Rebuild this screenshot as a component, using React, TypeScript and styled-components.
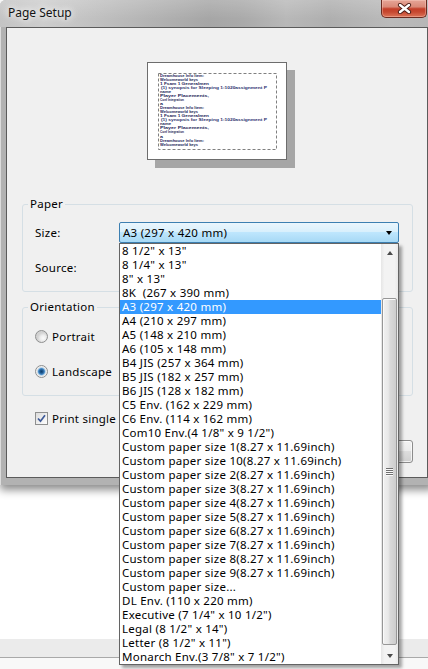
import React from 'react'
import styled, { createGlobalStyle } from 'styled-components'

const GlobalStyle = createGlobalStyle`
  html, body {
    margin: 0;
    padding: 0;
    background: #ffffff;
  }
  body {
    width: 428px;
    height: 669px;
    overflow: hidden;
    font-family: "Noto Sans", "Open Sans", sans-serif;
    font-size: 11.5px;
    letter-spacing: 0.25px;
    color: #000;
  }
`;

const Screen = styled.div`
  width: 428px;
  height: 669px;
  display: flex;
  flex-direction: column;
  overflow: hidden;
  background: #fff;
`;

const Window = styled.div`
  width: 434px;
  height: 485px;
  flex-shrink: 0;
  display: flex;
  flex-direction: column;
  position: relative;
  z-index: 1;
  background: #b2b2b2;
  border-radius: 6px 6px 0 0;
  box-shadow: inset 1px 0 0 #dcdcdc, 0 5px 9px rgba(0, 0, 0, 0.45);
`;

const TitleBar = styled.div`
  height: 27px;
  flex-shrink: 0;
  display: flex;
  align-items: flex-start;
  padding: 0 7px 0 8px;
  border-radius: 6px 6px 0 0;
  background:
    linear-gradient(180deg, rgba(255, 255, 255, 0.18), rgba(255, 255, 255, 0) 70%),
    linear-gradient(90deg, #c4c4c4 0%, #cdcdcd 10%, #bdbdbd 25%, #a6a6a6 48%, #aaaaaa 56%, #b8b8b8 66%, #afafaf 76%, #bababa 90%, #b6b6b6 100%);
`;

const Title = styled.span`
  margin-top: 5px;
  line-height: 16px;
  font-size: 12px;
  letter-spacing: 0;
  color: #141414;
  text-shadow: 0 0 6px #fff, 0 0 10px #fff;
`;

const CloseButton = styled.div`
  margin-left: auto;
  width: 46px;
  height: 18px;
  box-sizing: border-box;
  display: flex;
  align-items: center;
  justify-content: center;
  border: 1px solid #6b2b20;
  border-top: none;
  border-radius: 0 0 5px 5px;
  background: linear-gradient(180deg, #e6a597 0%, #da8a78 40%, #c43f29 52%, #c64830 70%, #dc7458 100%);
  box-shadow: inset 0 0 0 1px rgba(255, 220, 210, 0.35);
`;

const Client = styled.div`
  flex: 1;
  margin: 0 6px 7px 6px;
  border: 1px solid #5b5b5b;
  background: #f0f0f0;
  display: flex;
  flex-direction: column;
`;

const PreviewArea = styled.div`
  height: 168px;
  flex-shrink: 0;
  box-sizing: border-box;
  padding-top: 34px;
  display: flex;
  justify-content: center;
`;

const Sheet = styled.div`
  width: 140px;
  height: 98px;
  box-sizing: border-box;
  border: 1px solid #6d6d6d;
  background: #fff;
  box-shadow: 8px 8px 0 #a6a6a6;
`;

const Group = styled.fieldset<{ $top: number }>`
  margin: ${p => p.$top}px 14px 0 15px;
  padding: 0;
  border: 1px solid #d5dfe5;
  border-radius: 3px;
  min-inline-size: 0;
`;

const Legend = styled.legend`
  margin-left: 5px;
  padding: 0 2px;
  line-height: 16px;
`;

const GroupBody = styled.div<{ $padTop: number; $padBottom: number; $gap: number }>`
  display: flex;
  flex-direction: column;
  gap: ${p => p.$gap}px;
  padding: ${p => p.$padTop}px 13px ${p => p.$padBottom}px 12px;
`;

const FieldRow = styled.div`
  display: flex;
  align-items: center;
  height: 21px;
`;

const FieldLabel = styled.span`
  width: 84px;
  flex-shrink: 0;
`;

const Combo = styled.div<{ $focused?: boolean }>`
  position: relative;
  flex: 1;
  height: 21px;
  box-sizing: border-box;
  display: flex;
  align-items: center;
  padding: 0 0 0 3px;
  border: 1px solid ${p => (p.$focused ? '#3c7fb1' : '#707070')};
  border-radius: 2px;
  background: ${p =>
    p.$focused
      ? 'linear-gradient(180deg, #eaf6fd 0%, #d9f0fc 45%, #bee6fd 50%, #a7d9f5 100%)'
      : 'linear-gradient(180deg, #f2f2f2 0%, #ebebeb 45%, #dddddd 50%, #cfcfcf 100%)'};
`;

const ComboText = styled.span`
  flex: 1;
  white-space: pre;
`;

const DownGlyph = styled.span<{ $color?: string }>`
  width: 0;
  height: 0;
  border-left: 3.5px solid transparent;
  border-right: 3.5px solid transparent;
  border-top: 4px solid ${p => p.$color || '#000'};
`;

const UpGlyph = styled.span`
  width: 0;
  height: 0;
  border-left: 3.5px solid transparent;
  border-right: 3.5px solid transparent;
  border-bottom: 4px solid #4a4a4a;
`;

const ComboArrow = styled.span`
  width: 19px;
  display: flex;
  justify-content: center;
`;

const DropList = styled.div`
  position: absolute;
  left: -1px;
  top: calc(100% + 1px);
  width: 280px;
  height: 422px;
  box-sizing: border-box;
  z-index: 10;
  display: flex;
  border: 1px solid #646464;
  background: #fff;
  box-shadow: 3px 3px 3px rgba(0, 0, 0, 0.35);
`;

const Options = styled.div`
  flex: 1;
  display: flex;
  flex-direction: column;
`;

const Option = styled.div<{ $selected?: boolean }>`
  height: 14px;
  line-height: 14px;
  padding-left: 2px;
  white-space: pre;
  background: ${p => (p.$selected ? '#3399ff' : 'transparent')};
  color: ${p => (p.$selected ? '#fff' : '#000')};
`;

const ScrollBar = styled.div`
  width: 17px;
  display: flex;
  flex-direction: column;
  background: linear-gradient(90deg, #e6e6e6 0%, #f3f3f3 20%, #f3f3f3 80%, #e9e9e9 100%);
`;

const ScrollButton = styled.div`
  height: 17px;
  flex-shrink: 0;
  display: flex;
  align-items: center;
  justify-content: center;
`;

const Track = styled.div<{ $offset: number }>`
  flex: 1;
  padding-top: ${p => p.$offset}px;
  padding-bottom: 1px;
  display: flex;
  flex-direction: column;
`;

const Thumb = styled.div<{ $size: number }>`
  height: ${p => p.$size}px;
  margin: 0 1px;
  box-sizing: border-box;
  border: 1px solid #979797;
  border-radius: 2px;
  background: linear-gradient(90deg, #f1f1f1 0%, #e9e9e9 40%, #d9d9d9 55%, #cdcdcd 100%);
  box-shadow: inset 1px 1px 0 #fbfbfb;
  display: flex;
  flex-direction: column;
  align-items: center;
  justify-content: center;
  gap: 1px;
`;

const Grip = styled.span`
  width: 7px;
  height: 1px;
  background: #6f6f6f;
  box-shadow: 0 1px 0 #fafafa;
`;

const OptionRow = styled.div`
  display: flex;
  align-items: center;
  gap: 4px;
  height: 20px;
`;

const Radio = styled.span<{ $checked?: boolean }>`
  width: 13px;
  height: 13px;
  box-sizing: border-box;
  flex-shrink: 0;
  border-radius: 50%;
  border: 1px solid #8e8f8f;
  background: ${p =>
    p.$checked
      ? 'radial-gradient(circle at 50% 50%, #0f3f6e 0, #1e5a92 1.6px, #4b8cc6 3px, #a9d0ee 3.8px, #e4e4e4 4.4px, #f6f6f6 5.5px)'
      : 'radial-gradient(circle at 65% 65%, #fbfbfb 0, #ececec 3px, #d2d2d2 5.5px)'};
`;

const CheckRow = styled.div`
  display: flex;
  align-items: center;
  gap: 4px;
  height: 20px;
  margin: 12px 0 0 28px;
`;

const Check = styled.span`
  width: 13px;
  height: 13px;
  box-sizing: border-box;
  flex-shrink: 0;
  display: flex;
  align-items: center;
  justify-content: center;
  border: 1px solid #8e8f8f;
  background: linear-gradient(135deg, #dcdcdc 0%, #f1f1f1 60%, #fdfdfd 100%);
`;

const ButtonRow = styled.div`
  display: flex;
  justify-content: flex-end;
  gap: 6px;
  margin-top: 12px;
  padding-right: 14px;
`;

const Button = styled.div`
  width: 75px;
  height: 23px;
  box-sizing: border-box;
  border: 1px solid #8c8c8c;
  border-radius: 3px;
  background: linear-gradient(180deg, #f3f3f3 0%, #ebebeb 48%, #dddddd 50%, #cfcfcf 100%);
  box-shadow: inset 0 0 0 1px rgba(255, 255, 255, 0.7);
`;

const Band = styled.div`
  margin-top: 154px;
  height: 18px;
  flex-shrink: 0;
  background: #ebebeb;
  border-bottom: 1px solid #a9a9a9;
`;

const Below = styled.div`
  flex: 1;
  background: #f8f8f8;
`;

const paperSizes = [
  '8 1/2" x 13"',
  '8 1/4" x 13"',
  '8" x 13"',
  '8K  (267 x 390 mm)',
  'A3 (297 x 420 mm)',
  'A4 (210 x 297 mm)',
  'A5 (148 x 210 mm)',
  'A6 (105 x 148 mm)',
  'B4 JIS (257 x 364 mm)',
  'B5 JIS (182 x 257 mm)',
  'B6 JIS (128 x 182 mm)',
  'C5 Env. (162 x 229 mm)',
  'C6 Env. (114 x 162 mm)',
  'Com10 Env.(4 1/8" x 9 1/2")',
  'Custom paper size 1(8.27 x 11.69inch)',
  'Custom paper size 10(8.27 x 11.69inch)',
  'Custom paper size 2(8.27 x 11.69inch)',
  'Custom paper size 3(8.27 x 11.69inch)',
  'Custom paper size 4(8.27 x 11.69inch)',
  'Custom paper size 5(8.27 x 11.69inch)',
  'Custom paper size 6(8.27 x 11.69inch)',
  'Custom paper size 7(8.27 x 11.69inch)',
  'Custom paper size 8(8.27 x 11.69inch)',
  'Custom paper size 9(8.27 x 11.69inch)',
  'Custom paper size...',
  'DL Env. (110 x 220 mm)',
  'Executive (7 1/4" x 10 1/2")',
  'Legal (8 1/2" x 14")',
  'Letter (8 1/2" x 11")',
  'Monarch Env.(3 7/8" x 7 1/2")',
]
const selectedSize = 4

const previewBlock = [
  { t: 'Dreamhouse Info Item:', w: 44, x: 12 },
  { t: 'Welcomeworld keys', w: 38, x: 12 },
  { t: '1 Fsam 1 Generalmen', w: 49, x: 12 },
  { t: '(1) synopsis for Sleeping 1:1020assignment P', w: 106, x: 13 },
  { t: 'name', w: 11, x: 12 },
  { t: 'Player Placements,', w: 49, x: 12 },
  { t: 'Conf Integration', w: 24, x: 12 },
  { t: 'a', w: 3, x: 12 },
]
const previewLines = [...previewBlock, ...previewBlock, previewBlock[0], previewBlock[1]]

const SheetPreview = () => (
  <svg width="138" height="96" viewBox="0 0 138 96">
    <rect x="10.5" y="10.5" width="118" height="76" fill="none" stroke="#808080" strokeDasharray="3 2" />
    {previewLines.map((l, i) => (
      <text
        key={i}
        x={l.x}
        y={13.6 + i * 4.06}
        fontSize="4.4"
        fontFamily="Liberation Sans, sans-serif"
        fontWeight="bold"
        letterSpacing="0"
        fill={i % 8 === 3 ? '#2b2f6e' : '#1b2457'}
        textLength={l.w}
        lengthAdjust="spacingAndGlyphs"
      >
        {l.t}
      </text>
    ))}
  </svg>
)

const CloseGlyph = () => (
  <svg width="15" height="11" viewBox="0 0 15 11">
    <path d="M3 2 L12 9 M12 2 L3 9" stroke="#4a1d16" strokeWidth="4.2" strokeLinecap="round" />
    <path d="M3 2 L12 9 M12 2 L3 9" stroke="#ffffff" strokeWidth="2.4" strokeLinecap="round" />
  </svg>
)

const CheckGlyph = () => (
  <svg width="9" height="9" viewBox="0 0 9 9">
    <path d="M1 4.5 L3.5 7.2 L8 1.2" fill="none" stroke="#3e5a98" strokeWidth="1.7" />
  </svg>
)

const App = () => {
  return (
    <Screen>
      <GlobalStyle />
      <Window>
        <TitleBar>
          <Title>Page Setup</Title>
          <CloseButton>
            <CloseGlyph />
          </CloseButton>
        </TitleBar>
        <Client>
          <PreviewArea>
            <Sheet>
              <SheetPreview />
            </Sheet>
          </PreviewArea>

          <Group $top={0}>
            <Legend>Paper</Legend>
            <GroupBody $padTop={10} $padBottom={13} $gap={14}>
              <FieldRow>
                <FieldLabel>Size:</FieldLabel>
                <Combo $focused>
                  <ComboText>{paperSizes[selectedSize]}</ComboText>
                  <ComboArrow>
                    <DownGlyph />
                  </ComboArrow>
                  <DropList>
                    <Options>
                      {paperSizes.map((s, i) => (
                        <Option key={s} $selected={i === selectedSize}>
                          {s}
                        </Option>
                      ))}
                    </Options>
                    <ScrollBar>
                      <ScrollButton>
                        <UpGlyph />
                      </ScrollButton>
                      <Track $offset={37}>
                        <Thumb $size={347}>
                          <Grip />
                          <Grip />
                          <Grip />
                          <Grip />
                        </Thumb>
                      </Track>
                      <ScrollButton>
                        <DownGlyph $color="#4a4a4a" />
                      </ScrollButton>
                    </ScrollBar>
                  </DropList>
                </Combo>
              </FieldRow>
              <FieldRow>
                <FieldLabel>Source:</FieldLabel>
                <Combo>
                  <ComboText />
                  <ComboArrow>
                    <DownGlyph />
                  </ComboArrow>
                </Combo>
              </FieldRow>
            </GroupBody>
          </Group>

          <Group $top={7}>
            <Legend>Orientation</Legend>
            <GroupBody $padTop={11} $padBottom={14} $gap={15}>
              <OptionRow>
                <Radio />
                <span>Portrait</span>
              </OptionRow>
              <OptionRow>
                <Radio $checked />
                <span>Landscape</span>
              </OptionRow>
            </GroupBody>
          </Group>

          <CheckRow>
            <Check>
              <CheckGlyph />
            </Check>
            <span>Print single page</span>
          </CheckRow>

          <ButtonRow>
            <Button />
            <Button />
          </ButtonRow>
        </Client>
      </Window>
      <Band />
      <Below />
    </Screen>
  )
}

export default App
